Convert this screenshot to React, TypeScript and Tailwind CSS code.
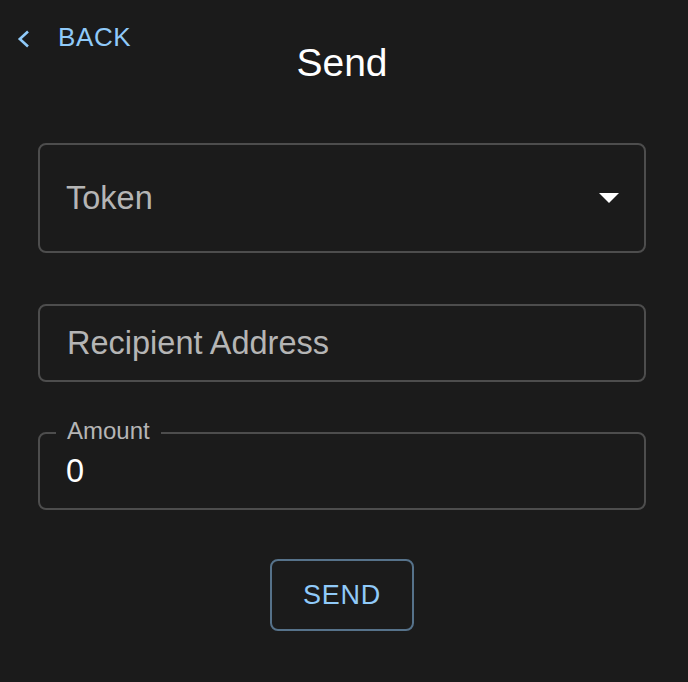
import React from "react";

export default function App() {
  return (
    <div className="w-full min-h-[682px] bg-[#1b1b1b] font-['Liberation_Sans',Arial,sans-serif] flex flex-col">
      <button className="self-start ml-[17px] mt-[22px] h-[30px] flex items-center text-[#90caf9]">
        <svg width="13" height="18" viewBox="0 0 13 18" className="mt-[3px]" fill="none">
          <path d="M11 1.5 L2.8 9 L11 16.5" stroke="#90caf9" strokeWidth="2.6" strokeLinecap="butt" strokeLinejoin="miter" />
        </svg>
        <span className="ml-[28px] text-[26px] leading-[30px] tracking-[0.6px]">BACK</span>
      </button>

      <div className="pl-[38px] pr-[42px] flex flex-col">
        <h1 className="mt-[-13px] text-center text-white text-[39px] leading-[48px] font-normal">Send</h1>

        <div className="mt-[56px] h-[110px] border-2 border-[#4d4d4d] rounded-[8px] flex items-center justify-between pl-[26px] pr-[25px]">
          <span className="text-[32.5px] leading-[36px] text-[#b5b5b5]">Token</span>
          <svg width="20" height="10" viewBox="0 0 20 10">
            <polygon points="0,0 20,0 10,10" fill="#ffffff" />
          </svg>
        </div>

        <div className="mt-[51px] h-[78px] border-2 border-[#4d4d4d] rounded-[8px] flex items-center pl-[27px]">
          <span className="text-[32.5px] leading-[36px] text-[#b5b5b5]">Recipient Address</span>
        </div>

        <div className="relative mt-[50px] h-[78px] border-2 border-[#4d4d4d] rounded-[8px] flex items-center pl-[26px]">
          <span className="absolute left-[16px] top-[-15px] px-[11px] bg-[#1b1b1b] text-[24px] leading-[24px] text-[#b5b5b5]">
            Amount
          </span>
          <span className="text-[32.5px] leading-[36px] text-white">0</span>
        </div>

        <button className="self-center mt-[49px] w-[144px] h-[72px] border-2 border-[#56728a] rounded-[8px] flex items-center justify-center text-[#90caf9] text-[27px] leading-[30px] tracking-[0.7px]">
          SEND
        </button>
      </div>
    </div>
  );
}
